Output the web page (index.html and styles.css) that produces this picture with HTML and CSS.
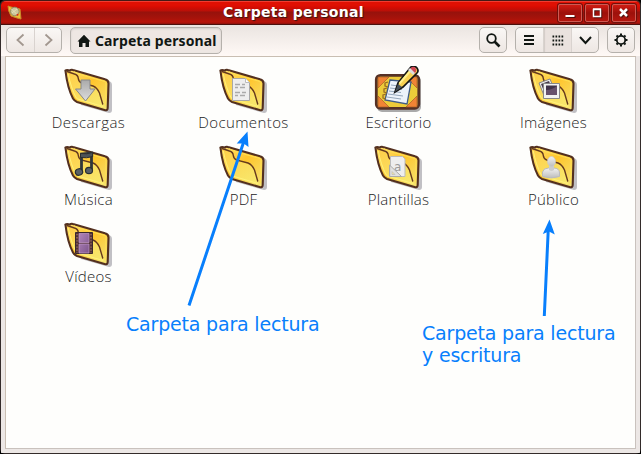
FILE: index.html
```
<!DOCTYPE html>
<html lang="es">
<head>
<meta charset="utf-8">
<title>Carpeta personal</title>
<link rel="stylesheet" href="styles.css">
</head>
<body>
<svg class="defs" width="0" height="0">
  <defs>
    <linearGradient id="gold" x1="0" y1="0" x2="1" y2="1"><stop offset="0" stop-color="#ffe276"/><stop offset=".45" stop-color="#ffc52c"/><stop offset="1" stop-color="#f3e478"/></linearGradient>
    <linearGradient id="front" x1="0" y1="0" x2=".6" y2="1"><stop offset="0" stop-color="#ffce48"/><stop offset="1" stop-color="#f8e66a"/></linearGradient>
    <linearGradient id="metal" x1="0" y1="0" x2="0" y2="1"><stop offset="0" stop-color="#aaa"/><stop offset="1" stop-color="#ddd"/></linearGradient>
    <linearGradient id="silver" x1="0" y1="0" x2="0" y2="1"><stop offset="0" stop-color="#f2f2f2"/><stop offset="1" stop-color="#bdbdbd"/></linearGradient>
    <linearGradient id="film" x1="0" y1="0" x2="1" y2="1"><stop offset="0" stop-color="#b185ba"/><stop offset="1" stop-color="#7d558c"/></linearGradient>
    <symbol id="folder" viewBox="0 0 48 48">
      <path d="M10 9 45 15q3 1 3 4V44q0 3-3 3L17 39z" fill="#8e8c96" opacity=".55"/>
      <path d="M1.500 5Q1 4 3 4l3 .5Q7 3.300 9 4L41 13.200Q44.500 14 44.500 17.500L43.700 42Q43.600 45 40.500 44L13 36Q10.500 35 9 32.500Q3.500 22 1.500 5z" fill="url(#gold)" stroke="#53301f" stroke-width="2.100" stroke-linejoin="round"/>
      <path d="M3 6 10.500 8Q14 9 14.300 12.500T18 17.700L29 20.500Q33 22 35.500 28L38.700 37.500 41.500 42.300 14 34.300Q11 33 9.500 29Q5 20 3 6z" fill="url(#front)"/>
      <path d="M4.300 8Q7 22 12 31.500q1 1.500 4 2.200L39 40.500" fill="none" stroke="#fff27a" stroke-width="1"/>
      <path d="M3 5.500 10.500 8Q14 9 14.300 12.500T18 17.200L29 20Q33 21.500 35.500 27L38.700 38" fill="none" stroke="#65391d" stroke-width="1.400" stroke-linecap="round"/>
      <path d="M10 5.700 16 8.500 41 15.500Q42 16 42 18L41.500 40" fill="none" stroke="#ffe052" stroke-width="1"/>
    </symbol>
  </defs>
</svg>
<main class="window">
  <header class="titlebar">
    <svg class="app" viewBox="0 0 16 16"><path d="M1 1 4 2 13 4 14 14 10 13 4 11Q1 6 1 1z" fill="#efbd35" stroke="#c98b2a"/><circle cx="7.800" cy="6.500" r="4.300" fill="#cbc69b" stroke="#8f8968"/><path d="m4.500 4 5 5M5 8l5-4" stroke="#e5dfb8"/><circle cx="10.500" cy="9.800" r="1" fill="#d72718"/></svg>
    <h1>Carpeta personal</h1>
    <div class="controls">
      <span><svg viewBox="0 0 24 18"><path d="M7.500 12h9" stroke="#fff" stroke-width="2"/></svg></span>
      <span><svg viewBox="0 0 24 18"><path d="M8.500 5.500h7v7h-7zM8 5h8" stroke="#fff" stroke-width="1.500" fill="none"/></svg></span>
      <span><svg viewBox="0 0 24 18"><path d="m8 5 7 7m0-7-7 7" stroke="#fff" stroke-width="2.500"/></svg></span>
    </div>
  </header>
  <nav class="toolbar">
    <div class="group navgroup">
      <span><svg viewBox="0 0 27 24"><path d="m16.500 6.500-6 5.500 6 5.500" stroke="#a2978f" stroke-width="1.800" fill="none"/></svg></span>
      <span><svg viewBox="0 0 27 24"><path d="m10.500 6.500 6 5.500-6 5.500" stroke="#a2978f" stroke-width="1.800" fill="none"/></svg></span>
    </div>
    <div class="group path"><svg viewBox="0 0 14 14"><path d="m7 .8 6.500 6.700H12V13H8.500V9h-3v4H2V7.500H.5z" fill="#111713"/></svg><b>Carpeta personal</b></div>
    <div class="group search"><svg viewBox="0 0 27 24"><circle cx="11.500" cy="10.500" r="4.300" fill="none" stroke="#111713" stroke-width="1.800"/><path d="m14.500 13.500 5 5" stroke="#111713" stroke-width="2.600"/></svg></div>
    <div class="group views">
      <span><svg viewBox="0 0 27 24"><path d="M8 8h10M8 12h10M8 16h10" stroke="#111713" stroke-width="2"/></svg></span>
      <span class="active"><svg viewBox="0 0 27 24"><path d="M8.500 8.500h11M8.500 12.500h11M8.500 16.500h11" stroke="#111713" stroke-width="2" stroke-dasharray="1.700 1.300"/></svg></span>
      <span><svg viewBox="0 0 27 24"><path d="m8 9 5.500 6L19 9" stroke="#111713" stroke-width="2" fill="none"/></svg></span>
    </div>
    <div class="group settings"><svg viewBox="0 0 27 24"><circle cx="13" cy="12" r="4.200" fill="none" stroke="#111713" stroke-width="1.800"/><path d="M13 5.500v2m0 9v2M6.500 12h2m9 0h2M8.500 7.500l1.300 1.300m6.400 6.400 1.300 1.300m0-9-1.300 1.300m-6.400 6.400-1.300 1.300" stroke="#111713" stroke-width="2"/></svg></div>
  </nav>
  <section class="files">
    <div class="file"><svg viewBox="0 0 48 48"><use href="#folder"/><path d="M17 14h9v9h5L21.500 35 11.500 23H17z" fill="url(#metal)" stroke="#888" stroke-width="1"/></svg><span class="descargas">Descargas</span></div>
    <div class="file"><svg viewBox="0 0 48 48"><use href="#folder"/><path d="M13.500 12.500h13l4 4v18h-17z" fill="#eee" stroke="#a8a8a8"/><path d="M26.500 12.500v4h4" fill="#fff" stroke="#bbb"/><path d="M16 18.500h5m2 0h3m-10 3h3m2 0h5m-10 5h5m2 0h4m-11 3h3m2 0h5" stroke="#aaa" stroke-width="1.300"/></svg><span class="documentos">Documentos</span></div>
    <div class="file"><svg viewBox="0 0 48 48">
      <rect x="3" y="10" width="44" height="36" rx="5" fill="#aaa"/><rect x="2.300" y="9.300" width="42.500" height="33" rx="4" fill="#edcb39" stroke="#553126" stroke-width="2.800"/><path d="M4 11h11L4 22zm39 0v11L32 11zM4 30l11 11H4zm39 0v11H32z" fill="#f18335" stroke="#a65e27" stroke-width=".7"/><path d="m16 14 21 2-4 22-22-4z" fill="#edf3fb" stroke="#405c87" stroke-width="1.300"/><path d="m17 19 12 1.500m-13 1.500 12 1.500m-13 1.500 12 1.500m-13 1.500 15 2m-16 1 14 2" stroke="#96a8bc"/><path d="m14 16-3 1v3l3 1m-1 1-3 1v3l3 1m-1 1-3 1v3l3 1" fill="none" stroke="#986c22" stroke-width="1.300"/><path d="m21 26 3-9L37 1q3-2 6 1 2 3 0 5L29 21z" fill="#f6cf50" stroke="#151515" stroke-width="1.700"/><path d="m25.500 17.500 12-14" stroke="#fff08a" stroke-width="2"/><path d="m36 3 2-2q3-1 4 2 1 2-1 4l-1 1z" fill="#cf4654"/><path d="m34 4 5 5 2-2-5-5z" fill="#ddd"/><path d="m21 26 3-8 4 3z" fill="#46505b"/></svg><span class="escritorio">Escritorio</span></div>
    <div class="file"><svg viewBox="0 0 48 48"><use href="#folder"/><path d="m10 17 11-4 6 15-11 4z" fill="#eee" stroke="#888"/><path d="m12 18 8-3 4 10-8 3z" fill="#493d4f"/><path d="M14.500 17.500h16v15h-16z" fill="#f2f2f2" stroke="#888"/><path d="M17 19.500h11v9.500H17z" fill="#40334a"/><path d="M17 24q6 0 11-4v9H17z" fill="#67516c"/></svg><span class="imagenes">Imágenes</span></div>
    <div class="file"><svg viewBox="0 0 48 48"><use href="#folder"/><path d="M17.500 28V11l10-1v17" fill="none" stroke="#30363a" stroke-width="2.800"/><path d="M16.500 10.500q6 1 12.200-1v4q-6 2-12.200 1z" fill="#4d5356" stroke="#292d2f"/><ellipse cx="15" cy="29" rx="3.700" ry="3.200" transform="rotate(-20 15 29)" fill="#596064" stroke="#292e31" stroke-width="1.200"/><ellipse cx="25" cy="27.500" rx="3.500" ry="3.200" fill="#596064" stroke="#292e31" stroke-width="1.200"/></svg><span class="musica">Música</span></div>
    <div class="file"><svg viewBox="0 0 48 48"><use href="#folder"/></svg><span class="pdf">PDF</span></div>
    <div class="file"><svg viewBox="0 0 48 48"><use href="#folder"/><path d="M16.500 13.500h12l2.500 2.500v17.500H16.500z" fill="#eee" stroke="#bbb"/><text x="20" y="28" class="glyph">a</text><path d="m15.500 22 12 11.500h-12z" fill="#ddd" fill-opacity=".8" stroke="#aaa"/><path d="m18 28.500 3 3h-3z" fill="#f8e99b" stroke="#bbb" stroke-width=".7"/></svg><span class="plantillas">Plantillas</span></div>
    <div class="file"><svg viewBox="0 0 48 48"><use href="#folder"/><path d="M13.500 33.500V29q1-4 6-4h5q6 0 6 5v3.500q-8 3-17 0z" fill="url(#silver)" stroke="#bbb"/><path d="M20 22h5v5q-2.500 2-5 0z" fill="#ccc"/><ellipse cx="22.500" cy="18.500" rx="4" ry="5" fill="url(#silver)" stroke="#c8c8c8" stroke-width=".7"/></svg><span class="publico">Público</span></div>
    <div class="file"><svg viewBox="0 0 48 48"><use href="#folder"/><path d="M11.500 12.500h17v21h-17z" fill="#513038" stroke="#39282c"/><path d="M15 13.500h10v9H15zM15 24h10v9H15z" fill="url(#film)" stroke="#c39bc9" stroke-width=".7"/><path d="M13 14v19M27 14v19" stroke="#a27561" stroke-width="1.300" stroke-dasharray="1.300 1.800"/></svg><span class="videos">Vídeos</span></div>
  </section>
  <svg class="arrows" viewBox="0 0 641 454"><path d="m189 305.500 54.500-163M544.300 316l3.900-85" stroke="#087ffc" stroke-width="3"/><path d="m247.500 131.500 1 15.500-4.800-3.500-7 0zM549.500 219.500l5.300 15-5.800-3-6.200 2.500z" fill="#087ffc"/></svg>
  <p class="note read">Carpeta para lectura</p>
  <p class="note write">Carpeta para lectura<br>y escritura</p>
</main>
</body>
</html>
```
FILE: styles.css
```
* { box-sizing: border-box; }
body { margin: 0; background: #000; overflow: hidden; }
svg { display: block; }
.defs { position: absolute; }
.window { position: relative; width: 641px; height: 454px; display: flex; flex-direction: column; padding: 0 1px 1px; overflow: hidden; background: #332b2a; border-radius: 5px; }
.titlebar { height: 25px; flex: none; display: grid; grid-template-columns: 116px 1fr 116px; align-items: center; border-top: 1px solid #451915; border-bottom: 1px solid #4b100c; background: linear-gradient(#f13c30 0 1px, #e01003 1px 4px, #d70c02 6px, #b91008 10px, #96120c 11px, #a6130b 17px, #b91309 21px, #8b110c); border-radius: 5px 5px 0 0; }
.app { width: 16px; height: 16px; margin: 1px 0 0 6px; }
h1 { margin: 0 0 2px; font: bold 14px/20px "DejaVu Sans", sans-serif; text-align: center; color: #fff; text-shadow: 1px 1px 1px #351410; white-space: nowrap; padding-right: 54px; letter-spacing: .32px; }
.controls { display: flex; gap: 3px; justify-content: flex-end; padding-right: 4px; }
.controls span { width: 24px; height: 18px; border: 1px solid #cf5a52; border-radius: 2px; box-shadow: 0 0 0 1px #6f100b; background: linear-gradient(#d01b12, #9c110b 50%, #b5160e); }
.controls svg { width: 24px; height: 18px; margin: -1px; filter: drop-shadow(1px 1px 0 #4b100c); }
.toolbar { height: 31px; flex: none; display: flex; align-items: flex-start; padding: 2px 5px 2px; background: linear-gradient(#eae4e0, #fff9f6); }
.group { height: 27px; display: flex; align-items: center; border: 1px solid #b5b1ac; border-radius: 5px; background: linear-gradient(#faf7f5, #eee7e3); overflow: hidden; }
.group > span { height: 25px; flex: 1; border-left: 1px solid #d9d3cf; display: flex; justify-content: center; align-items: center; }
.group > span:first-child { border-left: 0; }
.group span svg { width: 27px; height: 24px; flex: none; }
.navgroup { width: 56px; height: 26px; }
.path { width: 152px; margin-left: 8px; padding-left: 6px; gap: 4px; background: #eee7e3; box-shadow: inset 0 1px 2px #d1ccc9; }
.path svg { width: 14px; height: 14px; flex: none; margin-top: 1px; }
.path b { font: bold 14px/20px "Noto Sans", sans-serif; color: #111713; white-space: nowrap; letter-spacing: .1px; padding-top: 1px; }
.search { width: 28px; height: 26px; margin-left: auto; }
.views { width: 84px; height: 26px; margin-left: 8px; }
.active { background: #eae2de; box-shadow: inset 1px 0 1px #d3ccc7; }
.settings { width: 28px; height: 26px; margin-left: 8px; }
.search svg, .settings svg { width: 27px; height: 24px; flex: none; }
.files { flex: 1; border: solid #ece7e5; border-width: 0 4px 4px; background: #fefefc; box-shadow: inset 1px 1px #c9beb2, inset -1px -1px #c9c2bd; display: grid; grid-template-columns: repeat(4, 155px); grid-auto-rows: 77px; padding: 10px 0 0 6px; }
.file { display: flex; flex-direction: column; align-items: center; }
.file svg { width: 48px; height: 48px; flex: none; margin: 0 2px -1px 0; }
.file span { font: 300 15px/18px "Open Sans", "Noto Sans", sans-serif; color: #1c1c1c; white-space: nowrap; letter-spacing: .25px; }
.file .descargas { letter-spacing: .45px; }
.file .documentos { letter-spacing: .4px; }
.glyph { font: 12px "DejaVu Sans", sans-serif; fill: #9a9a9a; }
.arrows { position: absolute; inset: 0; width: 641px; height: 454px; }
.note { position: absolute; margin: 0; font: 19px/22px "DejaVu Sans", sans-serif; color: #087ffc; white-space: nowrap; letter-spacing: -.19px; }
.read { left: 126px; top: 313px; }
.write { left: 422px; top: 322px; }
```
